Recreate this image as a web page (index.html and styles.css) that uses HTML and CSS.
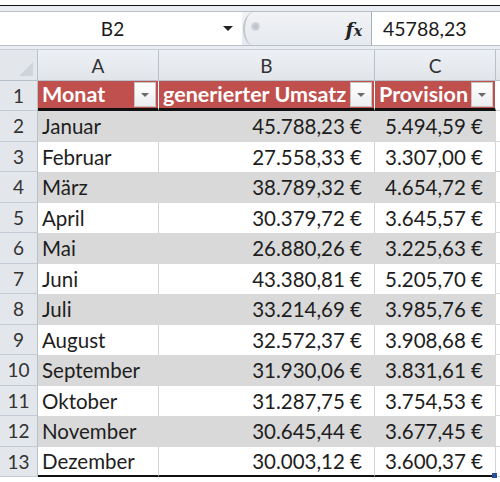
FILE: index.html
```html
<!DOCTYPE html>
<html lang="de">
<head>
<meta charset="utf-8">
<link rel="stylesheet" href="styles.css">
</head>
<body>
<div class="app">
  <div class="topline"></div>
  <div class="fbar">
    <div class="namebox">
      <span class="name">B2</span>
      <span class="dd-arrow"></span>
    </div>
    <div class="mid">
      <span class="knob"></span>
      <span class="fx"><i>f</i><i class="x">x</i></span>
    </div>
    <div class="formula">45788,23</div>
  </div>
  <div class="sheet">
    <div class="corner"><span class="tri"></span></div>
    <div class="colh">A</div>
    <div class="colh">B</div>
    <div class="colh">C</div>
    <div class="colh last"></div>

    <div class="rowh">1</div>
    <div class="th"><span>Monat</span><span class="btn"></span></div>
    <div class="th"><span>generierter Umsatz</span><span class="btn"></span></div>
    <div class="th"><span>Provision</span><span class="btn"></span></div>
    <div class="pad"></div>
  </div>
  <div class="rows" id="rows"></div>
</div>
<script src="app.js"></script>
</body>
</html>
```

FILE: app.js
```js
const data = [
  ["Januar","45.788,23 €","5.494,59 €"],
  ["Februar","27.558,33 €","3.307,00 €"],
  ["März","38.789,32 €","4.654,72 €"],
  ["April","30.379,72 €","3.645,57 €"],
  ["Mai","26.880,26 €","3.225,63 €"],
  ["Juni","43.380,81 €","5.205,70 €"],
  ["Juli","33.214,69 €","3.985,76 €"],
  ["August","32.572,37 €","3.908,68 €"],
  ["September","31.930,06 €","3.831,61 €"],
  ["Oktober","31.287,75 €","3.754,53 €"],
  ["November","30.645,44 €","3.677,45 €"],
  ["Dezember","30.003,12 €","3.600,37 €"]
];
const rows = document.getElementById("rows");
data.forEach((d, i) => {
  const r = document.createElement("div");
  r.className = "row" + (i % 2 === 0 ? " band" : "") + (i === data.length - 1 ? " lastrow" : "");
  r.innerHTML =
    '<div class="rowh">' + (i + 2) + '</div>' +
    '<div class="td txt">' + d[0] + '</div>' +
    '<div class="td num">' + d[1] + '</div>' +
    '<div class="td num">' + d[2] + (i === data.length - 1 ? '<span class="handle"></span>' : '') + '</div>' +
    '<div class="pad"></div>';
  rows.appendChild(r);
});
```

FILE: styles.css
```css
* { box-sizing: border-box; }
html, body { margin: 0; padding: 0; background: #fff; }
body { width: 500px; height: 482px; overflow: hidden; font-family: Lato, "Open Sans", sans-serif; color: #1e1e1e; }
.app { width: 500px; }
.topline { height: 6px; border-top: 2px solid #fff; border-bottom: 1px solid #111; background: #fff; box-shadow: 0 2px 0 #d9dfa6; }
.fbar { display: flex; height: 44px; padding: 5px 0 3px; background: #e9edf2; border-bottom: 1px solid #c9ced6; }
.namebox { width: 242px; background: #fff; border-top: 1px solid #b9c0ca; border-bottom: 1px solid #b9c0ca; display: flex; align-items: center; }
.name { flex: 1; text-align: center; font-size: 19px; padding-left: 2px; color: #1a1a1a; }
.dd-arrow { width: 0; height: 0; border-left: 5px solid transparent; border-right: 5px solid transparent; border-top: 5px solid #222; margin-right: 9px; }
.mid { width: 130px; display: flex; align-items: center; justify-content: space-between; border-top: 1px solid #b9c0ca; border-bottom: 1px solid #b9c0ca; border-right: 1px solid #a8b0bb; background: linear-gradient(#f1f3f6, #e6e9ee); }
.knob { width: 22px; height: 34px; border-left: 2px solid #c3c8cf; border-radius: 50% 0 0 50%; margin-left: 1px; position: relative; }
.knob::after { content: ""; position: absolute; left: 6px; top: 10px; width: 9px; height: 9px; border-radius: 50%; background: radial-gradient(#b8bdc4, #e2e5e9); }
.fx { font-family: "DejaVu Serif", "Liberation Serif", serif; font-weight: bold; font-size: 19px; color: #222; margin-right: 9px; }
.fx .x { font-size: 14px; }
.formula { flex: 1; background: #fff; border-top: 1px solid #b9c0ca; border-bottom: 1px solid #b9c0ca; display: flex; align-items: center; padding-left: 11px; font-size: 19.5px; color: #1a1a1a; }

.sheet { display: grid; grid-template-columns: 38px 121px 216px 121px 4px; grid-template-rows: 31px 30px; background: #fff; }
.corner { background: #e3e7ec; border-right: 1px solid #b8c0ca; border-bottom: 1px solid #b8c0ca; position: relative; }
.tri { position: absolute; right: 4px; bottom: 4px; width: 0; height: 0; border-left: 14px solid transparent; border-bottom: 14px solid #cfd4da; }
.colh { background: linear-gradient(#edf0f4, #e1e5ea); border-right: 1px solid #b8c0ca; border-bottom: 1px solid #b8c0ca; display: flex; align-items: center; justify-content: center; font-size: 19px; color: #333; }
.colh.last { border-right: none; }
.rowh { background: #e3e7ec; border-right: 1px solid #b8c0ca; border-bottom: 1px solid #c4cbd4; display: flex; align-items: center; justify-content: center; font-size: 19px; color: #333; }
.th { background: #c0504d; color: #fff; font-weight: bold; font-size: 21.5px; display: flex; align-items: center; justify-content: space-between; padding: 2px 2px 2px 4px; border-bottom: 3px solid #111; border-right: 1px solid #fff; white-space: nowrap; overflow: hidden; }
.th span:first-child { line-height: 1; }
.btn { width: 22px; height: 25px; background: linear-gradient(#ffffff, #ecedef); border: 1px solid #c6c6c6; position: relative; flex: none; }
.btn::after { content: ""; position: absolute; left: 6px; top: 10px; border-left: 4px solid transparent; border-right: 4px solid transparent; border-top: 4px solid #6a6a6a; }
.pad { border-bottom: 1px solid #d6d6d6; }

.rows { display: flex; flex-direction: column; }
.row { display: grid; grid-template-columns: 38px 121px 216px 121px 4px; height: 30.5px; }
.td { display: flex; align-items: center; font-size: 20.5px; border-right: 1px solid #d4d4d4; color: #1e1e1e; }
.txt { padding-left: 4px; }
.num { justify-content: flex-end; padding-right: 12px; position: relative; }
.row.band .td { background: #d9d9d9; border-right-color: #d9d9d9; }
.row.lastrow .td { border-bottom: 2px solid #111; }
.handle { position: absolute; right: -2px; bottom: -3px; width: 5px; height: 5px; background: #2b4f9c; }
```
